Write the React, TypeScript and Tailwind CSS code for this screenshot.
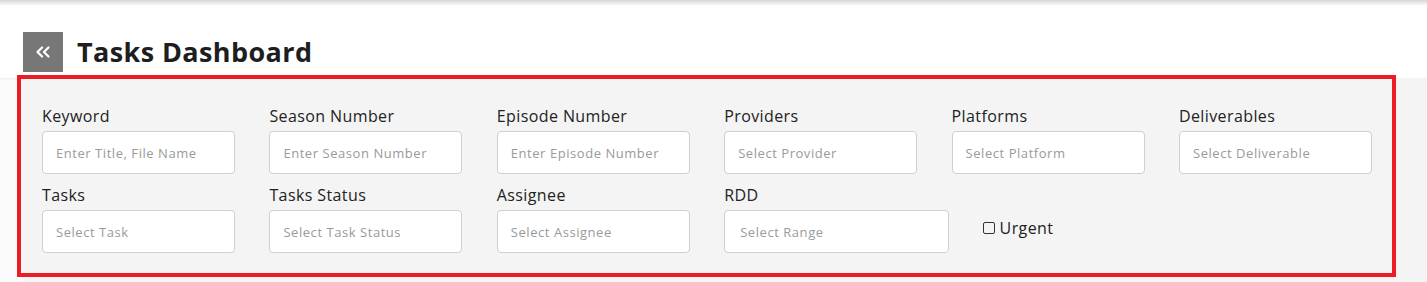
import { ChevronsLeft } from "lucide-react";

type Field = { label: string; placeholder: string; wide?: boolean };

const rows: Field[][] = [
  [
    { label: "Keyword", placeholder: "Enter Title, File Name" },
    { label: "Season Number", placeholder: "Enter Season Number" },
    { label: "Episode Number", placeholder: "Enter Episode Number" },
    { label: "Providers", placeholder: "Select Provider" },
    { label: "Platforms", placeholder: "Select Platform" },
    { label: "Deliverables", placeholder: "Select Deliverable" },
  ],
  [
    { label: "Tasks", placeholder: "Select Task" },
    { label: "Tasks Status", placeholder: "Select Task Status" },
    { label: "Assignee", placeholder: "Select Assignee" },
    { label: "RDD", placeholder: "Select Range", wide: true },
  ],
];

function FilterField({ label, placeholder, wide }: Field) {
  return (
    <div className="flex flex-col">
      <label className="mb-[5px] h-[20px] text-[16px] leading-[20px] tracking-[0.4px] text-[#222]">{label}</label>
      <input
        placeholder={placeholder}
        className={
          "h-[43px] rounded-[4px] border border-[#cfcfcf] bg-white text-[13px] tracking-[0.55px] text-[#333] outline-none placeholder:text-[#9a9a9a] " +
          (wide ? "w-[225px] pl-[15px]" : "w-[193px] pl-[13px]")
        }
      />
    </div>
  );
}

export default function App() {
  return (
    <div
      className="relative h-[282px] w-full overflow-hidden bg-[#fafafa]"
      style={{ fontFamily: '"Open Sans", "Liberation Sans", sans-serif' }}
    >
      <div className="h-[6px] bg-gradient-to-b from-[#d6d6d6] to-white" />
      <div className="flex h-[72px] items-start bg-white pl-[23px] pt-[26px] shadow-[0_1px_2px_rgba(0,0,0,0.06)]">
        <button className="flex h-[40px] w-[40px] items-center justify-center bg-[#777777] text-white">
          <ChevronsLeft size={22} strokeWidth={2.4} />
        </button>
        <h1 className="ml-[14px] mt-[2px] text-[27px] font-bold leading-[36px] tracking-[0.4px] text-[#1e1e1e]">
          Tasks Dashboard
        </h1>
      </div>

      <div className="ml-[23px] h-[204px] bg-[#f4f4f4] pl-[19px] pt-[28px]">
        <div className="grid grid-cols-[repeat(6,193px)] gap-x-[34.4px]">
          {rows[0].map((f) => (
            <FilterField key={f.label} {...f} />
          ))}
        </div>
        <div className="mt-[11px] grid grid-cols-[repeat(6,193px)] gap-x-[34.4px]">
          {rows[1].map((f) => (
            <FilterField key={f.label} {...f} />
          ))}
          <div className="flex items-center pb-[2px] pl-[31px] pt-[20px]">
            <span className="mr-[5px] h-[12px] w-[12px] rounded-[2px] border-[1.5px] border-[#333]" />
            <span className="text-[16px] leading-[20px] tracking-[0.4px] text-[#222]">Urgent</span>
          </div>
        </div>
      </div>

      <div className="pointer-events-none absolute left-[17px] top-[75px] h-[202px] w-[1379px] border-[4px] border-[#ed1c24]" />
    </div>
  );
}
